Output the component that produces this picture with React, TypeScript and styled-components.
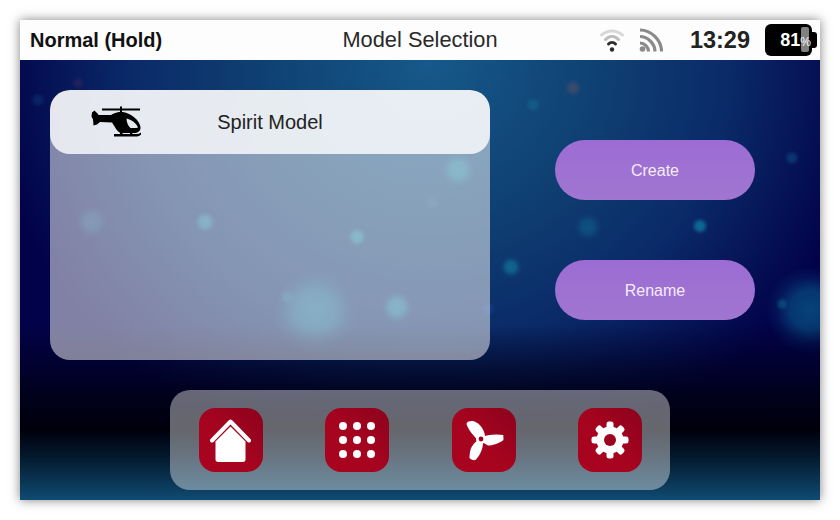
import styled, { createGlobalStyle } from "styled-components";

const GlobalStyle = createGlobalStyle`
  html, body {
    margin: 0;
    padding: 0;
    background: #fff;
    font-family: "Liberation Sans", Arial, sans-serif;
  }
`;

// glow spots of the wallpaper, page coords minus the header: x, y, radius, rgb, alpha
const spots: [number, number, number, string, number][] = [
  [438, 110, 17, "20,200,205", 0.34],
  [185, 162, 11, "20,200,205", 0.38],
  [72, 162, 16, "20,170,190", 0.22],
  [337, 177, 10, "20,210,210", 0.38],
  [295, 252, 42, "20,190,195", 0.35],
  [377, 247, 16, "20,200,205", 0.38],
  [267, 237, 8, "20,180,190", 0.18],
  [491, 207, 11, "20,170,190", 0.42],
  [568, 167, 14, "20,150,180", 0.28],
  [680, 166, 9, "20,180,200", 0.5],
  [513, 45, 8, "30,150,170", 0.25],
  [553, 28, 9, "170,90,80", 0.28],
  [772, 98, 8, "20,130,170", 0.32],
  [790, 250, 44, "10,120,160", 0.55],
  [762, 244, 7, "20,150,170", 0.35],
  [18, 40, 8, "30,120,170", 0.2],
  [58, 23, 7, "150,60,90", 0.18],
  [412, 142, 9, "80,170,220", 0.1],
  [468, 249, 8, "30,80,190", 0.3],
];

const spotLayers = spots
  .map(
    ([x, y, r, c, a]) =>
      `radial-gradient(circle ${r}px at ${x}px ${y}px, rgba(${c},${a}) 0%, rgba(${c},${a * 0.8}) 45%, rgba(${c},${a * 0.25}) 75%, rgba(${c},0) 100%)`
  )
  .join(", ");

const Screen = styled.div`
  width: 800px;
  height: 480px;
  margin: 20px;
  display: flex;
  flex-direction: column;
  box-shadow: 0 0 10px rgba(0, 0, 0, 0.5);
`;

const Header = styled.header`
  height: 40px;
  flex: none;
  background: #fdfdfd;
  display: grid;
  grid-template-columns: 1fr auto 1fr;
  align-items: center;
  color: #222;
`;

const Mode = styled.div`
  padding-left: 10px;
  font-size: 20px;
  font-weight: 700;
  color: #111;
`;

const Title = styled.div`
  font-size: 21.8px;
  color: #2a2a2a;
`;

const Status = styled.div`
  display: flex;
  align-items: center;
  justify-content: flex-end;
  gap: 15px;
  padding-right: 8px;
`;

const Clock = styled.div`
  margin-left: 12px;
  font-size: 23.5px;
  font-weight: 700;
`;

const Battery = styled.div`
  position: relative;
  width: 47px;
  height: 32px;
  border-radius: 6px;
  background: #000;
  display: flex;
  align-items: center;
  justify-content: flex-end;
  color: #fff;
  font-size: 18px;
  font-weight: 700;

  &::before {
    content: "";
    position: absolute;
    right: -5px;
    top: 8px;
    width: 5px;
    height: 16px;
    border-radius: 0 3px 3px 0;
    background: #000;
  }

  &::after {
    content: "";
    position: absolute;
    left: 36px;
    top: 3px;
    width: 8px;
    height: 25px;
    border-radius: 2px;
    background: #808080;
  }
`;

const BatteryText = styled.span`
  position: relative;
  z-index: 1;
  margin-right: 1px;

  small {
    font-size: 12px;
    font-weight: 400;
  }
`;

const Body = styled.main`
  flex: 1;
  padding: 30px 30px 10px;
  display: grid;
  grid-template-columns: 440px 1fr;
  grid-template-rows: 270px 100px;
  row-gap: 30px;
  background:
    linear-gradient(
      to bottom,
      rgba(0, 0, 0, 0) 0,
      rgba(0, 0, 0, 0) 60%,
      rgba(0, 0, 20, 0.85) 76%,
      #00000c 84%,
      #04182c 90%,
      #0f4b72 100%
    ),
    ${spotLayers},
    radial-gradient(ellipse 440px 420px at 410px 0px, #16598a 0%, #0f3f72 40%, #0a2a68 68%, #02024a 100%),
    #02024a;
`;

const Panel = styled.section`
  border-radius: 20px;
  background: rgba(255, 255, 255, 0.5);
  overflow: hidden;
`;

const ModelRow = styled.div`
  height: 64px;
  border-radius: 20px;
  background: rgba(255, 255, 255, 0.8);
  display: grid;
  grid-template-columns: 1fr auto 1fr;
  align-items: center;
  font-size: 20px;
  color: #222;
`;

const ModelIcon = styled.div`
  padding-left: 41px;
  display: flex;
`;

const Actions = styled.div`
  padding: 50px 0 0 65px;
  display: flex;
  flex-direction: column;
  align-items: flex-start;
  gap: 60px;
`;

const ActionButton = styled.button`
  width: 200px;
  height: 60px;
  padding: 2px 0 0;
  border: 0;
  border-radius: 30px;
  background: linear-gradient(to bottom, #9c6cd4, #a076d0);
  color: #f4ecfc;
  font-family: inherit;
  font-size: 16px;
`;

const Dock = styled.nav`
  grid-column: 1 / -1;
  justify-self: center;
  width: 500px;
  padding-left: 1px;
  box-sizing: border-box;
  border-radius: 20px;
  background: rgba(255, 255, 255, 0.4);
  display: flex;
  align-items: center;
  justify-content: center;
  gap: 62.5px;
`;

const DockButton = styled.div`
  width: 64px;
  height: 64px;
  border-radius: 16px;
  background: linear-gradient(225deg, #8c021c 0%, #a5041f 50%, #aa041f 100%);
  display: flex;
  align-items: center;
  justify-content: center;
`;

const Helicopter = () => (
  <svg width="50" height="32" viewBox="0 0 50 32">
    <rect x="11" y="2.500" width="38" height="2" />
    <rect x="29" y="0.500" width="2" height="7" />
    <path d="M1 6.500 L3.500 4.500 L7 8 L7.500 9 L20 9 C22 7.500 25 6.500 28 6 L32 6 C40 7.500 48.500 14 49.500 21 C50 24.500 47 27 44 27 L30 27 C26 26 23.500 20 21 16.500 L9 16 L6 18.500 L2.500 19.500 L2 13.500 L0.500 10.500 Z" />
    <path d="M35.500 12.500 C40 13.500 45 17 46.500 20.500 L46.500 22 L39.500 22 C37 20 35.500 16 35.500 12.500 Z" fill="#e6e9f0" />
    <rect x="29" y="26" width="2.500" height="3" />
    <rect x="39" y="26" width="2.500" height="3" />
    <path d="M23 28 L45 28 C47 28 48.500 27.500 50 26.500 L50 28.500 C48.500 30 47 30.500 45 30.500 L23 30.500 Z" />
  </svg>
);

const Wifi = () => (
  <svg width="24" height="26" viewBox="0 0 24 26" fill="none" strokeLinecap="round">
    <path d="M1.500 8 C7.500 2.500 16.500 2.500 22.500 8" stroke="#d8d8d8" strokeWidth="3" />
    <path d="M5.500 12.500 C9.500 8.500 14.500 8.500 18.500 12.500" stroke="#bcbcbc" strokeWidth="3" />
    <path d="M8.500 17 C10.500 15 13.500 15 15.500 17" stroke="#2c2c2c" strokeWidth="3" />
    <circle cx="12" cy="22.500" r="2.200" fill="#2c2c2c" />
  </svg>
);

const Signal = () => (
  <svg width="24" height="24" viewBox="0 0 24 24" fill="none" stroke="#8a8a8a" strokeWidth="3.200">
    <path d="M1 2 C12 2 22.500 12 22.500 23.500" />
    <path d="M1 8.500 C8.500 8.500 16 15.500 16 23.500" />
    <path d="M1 15 C5.500 15 9.500 19 9.500 23.500" />
    <circle cx="3.500" cy="21" r="2.800" fill="#8a8a8a" stroke="none" />
  </svg>
);

const HomeIcon = () => (
  <svg width="41" height="43" viewBox="0 0 41 43">
    <path d="M2 21.500 L20.500 2.500 L39 21.500" fill="none" stroke="#fff" strokeWidth="4" strokeLinecap="round" strokeLinejoin="round" />
    <path d="M20.500 7.500 L35.500 22.500 L35.500 40.500 C35.500 42 34.500 43 33 43 L8 43 C6.500 43 5.500 42 5.500 40.500 L5.500 22.500 Z" fill="#fff" />
  </svg>
);

const GridIcon = () => (
  <svg width="38" height="38" viewBox="0 0 38 38" fill="#fff">
    {[5, 19, 33].map((cy) =>
      [5, 19, 33].map((cx) => <circle key={`${cx}-${cy}`} cx={cx} cy={cy} r="4" />)
    )}
  </svg>
);

const FanIcon = () => (
  <svg width="40" height="44" viewBox="0 0 40 44">
    <path d="M2.500 6 C2.500 3.500 7 2.500 10.500 3.500 C15.500 5.500 20 11 21 17.500 L14 22.500 C11 19 4 12 2.500 6 Z" fill="#fff" />
    <path d="M19 18.700 C24 16.500 33 16 39.300 17 L39.500 22 C34 26 28 27.500 24 27.500 L18 24 Z" fill="#fff" />
    <path d="M13.500 22.500 L19 25 C19 31 15.500 38 11.500 42 C9 42.500 6.500 41.500 5.500 40 C5.500 33 7 27 13.500 22.500 Z" fill="#fff" />
    <circle cx="17" cy="21" r="5" fill="#fff" />
    <circle cx="17" cy="21" r="2.400" fill="#9c0320" />
  </svg>
);

const GearIcon = () => (
  <svg width="38" height="38" viewBox="0 0 38 38">
    <g fill="#fff">
      <circle cx="19" cy="19" r="13.500" />
      {[0, 45, 90, 135, 180, 225, 270, 315].map((deg) => (
        <rect key={deg} x="15.500" y="0.500" width="7" height="10" rx="2.500" transform={`rotate(${deg} 19 19)`} />
      ))}
    </g>
    <circle cx="19" cy="19" r="6" fill="#9c0320" />
  </svg>
);

export default function App() {
  return (
    <>
      <GlobalStyle />
      <Screen>
        <Header>
          <Mode>Normal (Hold)</Mode>
          <Title>Model Selection</Title>
          <Status>
            <Wifi />
            <Signal />
            <Clock>13:29</Clock>
            <Battery>
              <BatteryText>
                81<small>%</small>
              </BatteryText>
            </Battery>
          </Status>
        </Header>
        <Body>
          <Panel>
            <ModelRow>
              <ModelIcon>
                <Helicopter />
              </ModelIcon>
              <span>Spirit Model</span>
            </ModelRow>
          </Panel>
          <Actions>
            <ActionButton>Create</ActionButton>
            <ActionButton>Rename</ActionButton>
          </Actions>
          <Dock>
            <DockButton>
              <HomeIcon />
            </DockButton>
            <DockButton>
              <GridIcon />
            </DockButton>
            <DockButton>
              <FanIcon />
            </DockButton>
            <DockButton>
              <GearIcon />
            </DockButton>
          </Dock>
        </Body>
      </Screen>
    </>
  );
}
